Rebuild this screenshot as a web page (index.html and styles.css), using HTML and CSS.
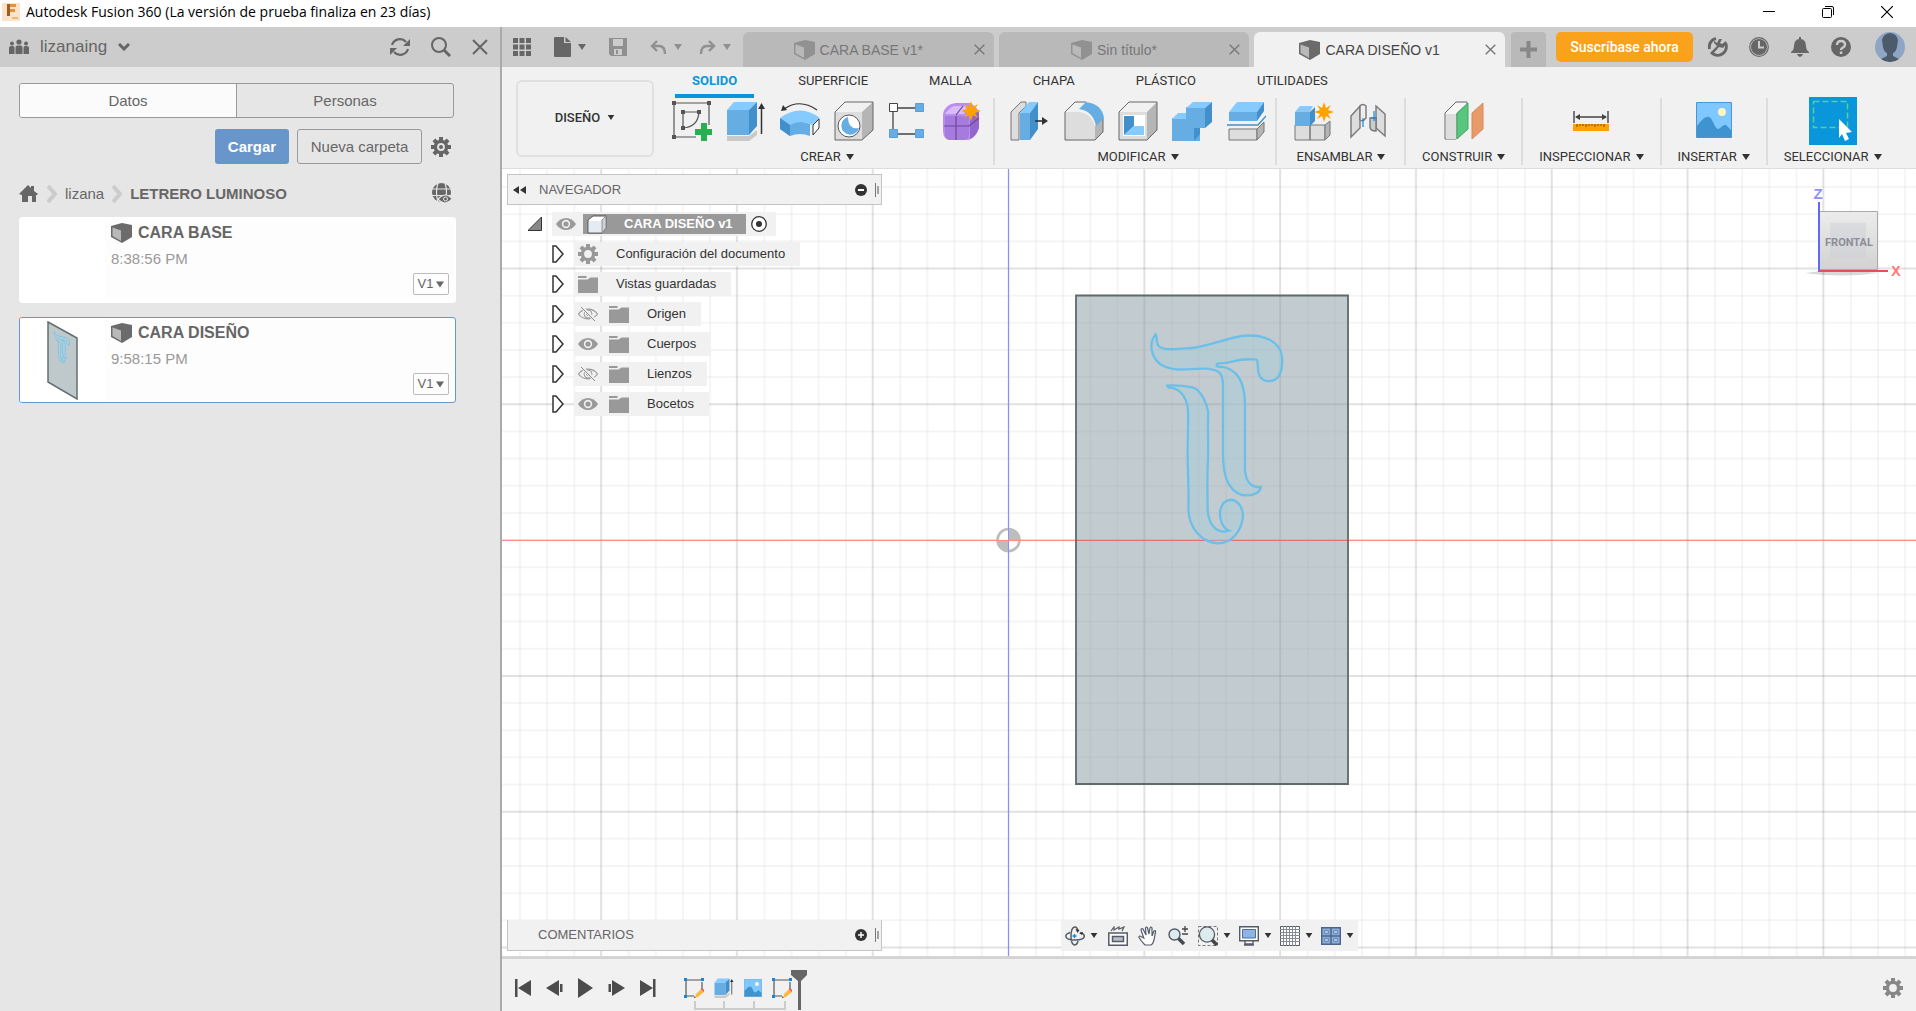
FILE: index.html
```html
<!DOCTYPE html>
<html lang="es">
<head>
<meta charset="utf-8">
<title>Autodesk Fusion 360</title>
<link rel="stylesheet" href="styles.css">
</head>
<body>
<svg class="defs" aria-hidden="true">
  <defs>
    <symbol id="cube" viewBox="0 0 21 20"><path fill="#6b6b6b" d="M0 3 11 0l10 2v12l-10 6L0 14z"/><path fill="#b9b9b9" d="M1.500 4.500l8.500 3v10.500l-8.500-5z"/></symbol>
    <symbol id="close" viewBox="0 0 16 16"><path d="M1 1l14 14M15 1L1 15" stroke="currentColor" stroke-width="2" fill="none"/></symbol>
    <symbol id="caret" viewBox="0 0 8 6"><path d="M0 0h8L4 6z" fill="currentColor"/></symbol>
    <symbol id="gear" viewBox="0 0 20 20"><g fill="currentColor"><path id="cog" d="M8 0h4v4H8zM8 16h4v4H8zM0 8h4v4H0zM16 8h4v4h-4z"/><use href="#cog" transform="rotate(45 10 10)"/></g><circle cx="10" cy="10" r="5.6" fill="none" stroke="currentColor" stroke-width="3.4"/></symbol>
    <symbol id="gear-dot" viewBox="0 0 20 20"><use href="#gear" width="20" height="20"/><circle cx="10" cy="10" r="2" fill="currentColor"/></symbol>
    <symbol id="eye" viewBox="0 0 20 14"><path d="M0 7C5-1 15-1 20 7 15 15 5 15 0 7z" fill="#999"/><circle cx="10" cy="7" r="3.4" fill="none" stroke="#f1f1f1" stroke-width="1.6"/></symbol>
    <symbol id="eye-off" viewBox="0 0 20 14"><path d="M.5 7C5 .5 15 .5 19.500 7 15 13.500 5 13.500.5 7z" fill="none" stroke="#999" stroke-width="1.200"/><circle cx="10" cy="7" r="4" fill="none" stroke="#999"/><circle cx="10" cy="7" r="1.600" fill="none" stroke="#999"/><path d="M3.500 0l14 14" stroke="#f1f1f1" stroke-width="3"/><path d="M3 0l14 14" stroke="#888"/></symbol>
    <symbol id="folder" viewBox="0 0 20 17"><path d="M0 0h8.500v2H0zM0 3.500h9.500l3-2H20V17H0z" fill="#999"/></symbol>
    <symbol id="closed" viewBox="0 0 12 18"><path d="M1 1h3l7 8-7 8H1z" fill="#fff" stroke="#333" stroke-width="1.500"/></symbol>
    <symbol id="star" viewBox="0 0 20 20"><path fill="#ffa200" d="M10 0l2 6 5-3-3 5 6 2-6 2 3 5-5-3-2 6-2-6-5 3 3-5-6-2 6-2-3-5 5 3z"/></symbol>
    <symbol id="picture" viewBox="0 0 36 36"><path fill="#7fc8ff" stroke="#4a97cf" d="M.5.5h35v35H.5z"/><path fill="#3f93cf" d="M1 24c4-5 8-10 12-9s5 11 9 12c3 0 5-5 8-4l5 5v7H1z"/><circle cx="26" cy="10" r="4" fill="#fdf6c4"/></symbol>
    <symbol id="extrude" viewBox="0 0 40 40"><path fill="#c9c9c9" d="M1 35h22l8-6v5l-8 6H1z"/><path fill="#66ade3" d="M1 9h22v25H1z"/><path fill="#86cbff" d="M1 9l7-8h23l-8 8z"/><path fill="#4190cc" d="M23 9l8-8v24l-8 9z"/><path d="M35.500 33V5" stroke="#333" stroke-width="1.500"/><path d="M32 8l3.500-6L39 8z" fill="#333"/></symbol>
    <symbol id="sketch-edit" viewBox="0 0 20 20"><path d="M2 2h16M2 2v16h8M18 4v8" fill="none" stroke="#555" stroke-width="1.200"/><path fill="#1587dd" d="M0 0h3v3H0zM17 0h3v3h-3zM0 17h3v3H0z"/><path fill="#ffb942" d="M12 16l5-5 3 3-6 5-3 1z"/><path fill="#f04455" d="M17 11l1-1 3 3-1 1z"/><path fill="#666" d="M10 18l2 2h-2z"/></symbol>
    <symbol id="drag" viewBox="0 0 4 14"><path d="M.5 0v14" stroke="#777"/><path d="M3 3v8" stroke="#888" stroke-width="1.500"/></symbol>
    <path id="glyph" d="M287 163C265 190 273 230 300 252C345 280 390 264 435 266C480 268 489 280 489 320V520C489 590 504 630 545 645C575 650 600 640 603 621C580 625 558 612 555 570V370C553 300 530 268 485 260C470 262 465 255 475 250C525 252 520 232 590 239C598 245 584 290 615 302C660 312 669 270 666 230C662 185 610 160 545 168C490 178 430 202 395 204C340 208 310 212 296 198C287 187 293 175 287 163ZM322 317C350 314 375 318 400 323C425 332 442 375 445 398C442 440 446 480 444 540C441 590 442 640 443 690C446 740 475 762 507 752C478 740 472 690 492 668C515 648 547 665 549 708C545 755 515 790 474 790C425 788 388 745 385 690C388 640 382 570 383 500C384 450 385 415 384 390C380 345 355 323 326 323Z"/>
  </defs>
</svg>

<header class="titlebar">
  <svg class="logo" viewBox="0 0 18 18"><path fill="#fbe3cb" d="M0 0h18v18H0z"/><path fill="#e8913d" d="M5 1h9v3H8v2h5v3H8v4H5z"/><path fill="#a75a1c" d="M5 1h3v12H5z"/><path fill="#f3b57b" d="M10 14h6v2h-6z"/></svg>
  <h1 class="title">Autodesk Fusion 360 (La versión de prueba finaliza en 23 días)</h1>
  <div class="window-buttons">
    <button aria-label="Minimizar"><svg width="12" height="12" viewBox="0 0 12 12"><path d="M0 5.500h12" stroke="#000"/></svg></button>
    <button aria-label="Restaurar"><svg width="12" height="12" viewBox="0 0 12 12"><path d="M.5 3.500a1 1 0 0 1 1-1h7a1 1 0 0 1 1 1v7a1 1 0 0 1-1 1h-7a1 1 0 0 1-1-1zM3 .5h7a1.500 1.500 0 0 1 1.500 1.500v7" fill="none" stroke="#000"/></svg></button>
    <button aria-label="Cerrar"><svg width="12" height="12" viewBox="0 0 12 12"><path d="M0 0l12 12M12 0L0 12" stroke="#000" stroke-width="1.200"/></svg></button>
  </div>
</header>

<div class="app">
  <aside class="data-panel">
    <div class="panel-head">
      <button class="team">
        <svg width="20" height="16" viewBox="0 0 20 16" fill="#666"><circle cx="3" cy="4.500" r="2"/><circle cx="10" cy="3" r="2.600"/><circle cx="17" cy="4.500" r="2"/><path d="M0 15V9q0-2 2-2h2q1.500 0 1.500 2v6zM6.500 15V8.500q0-2 2-2h3q2 0 2 2V15zM14.500 15V9q0-2 1.500-2h2q2 0 2 2v6z"/></svg>
        lizanaing
        <svg width="12" height="8" viewBox="0 0 12 8"><path d="M1 1l5 5 5-5" fill="none" stroke="#666" stroke-width="3"/></svg>
      </button>
      <div class="panel-tools">
        <button aria-label="Actualizar"><svg width="20" height="20" viewBox="0 0 20 20"><path d="M2 8a8.200 8.200 0 0 1 14-3M18 12a8.200 8.200 0 0 1-14 3" fill="none" stroke="#666" stroke-width="2.200"/><path d="M20 2v7h-7zM0 18v-7h7z" fill="#666"/></svg></button>
        <button aria-label="Buscar"><svg width="20" height="20" viewBox="0 0 20 20"><circle cx="8" cy="8" r="7" fill="none" stroke="#666" stroke-width="2"/><path d="M13 13l6 6" stroke="#666" stroke-width="3"/></svg></button>
        <button aria-label="Cerrar panel"><svg width="16" height="16"><use href="#close"/></svg></button>
      </div>
    </div>
    <div class="panel-body">
      <div class="segments"><button class="active">Datos</button><button>Personas</button></div>
      <div class="actions">
        <button class="primary">Cargar</button>
        <button class="outline">Nueva carpeta</button>
        <button class="gear" aria-label="Configuración"><svg width="20" height="20"><use href="#gear-dot"/></svg></button>
      </div>
      <nav class="crumbs">
        <a href="#" aria-label="Inicio"><svg width="20" height="18" viewBox="0 0 20 18"><path fill="#666" d="M0 9l9-9 3 3V1h3v5l4 3-1 1h-1v7h-4v-6H9v6H3v-7z"/></svg></a>
        <svg width="10" height="18" viewBox="0 0 10 18"><path d="M1 1l7 8-7 8" fill="none" stroke="#ccc" stroke-width="4"/></svg>
        <a href="#">lizana</a>
        <svg width="10" height="18" viewBox="0 0 10 18"><path d="M1 1l7 8-7 8" fill="none" stroke="#ccc" stroke-width="4"/></svg>
        <b>LETRERO LUMINOSO</b>
        <button class="globe" aria-label="Compartir"><svg width="20" height="21" viewBox="0 0 20 21"><circle cx="9.500" cy="9.500" r="9.500" fill="#666"/><path d="M0 6h19M0 12.500h19M6 0q-3 9 0 19M13 0q3 9 0 19" fill="none" stroke="#e6e6e6" stroke-width="1.200"/><path d="M6 16q8-8 14 0-7 8-14 0z" fill="#666" stroke="#e6e6e6" stroke-width="1.200"/><circle cx="13.500" cy="16" r="2" fill="none" stroke="#e6e6e6"/></svg></button>
      </nav>
      <ul class="files">
        <li class="file">
          <div class="thumb"></div>
          <div class="file-info">
            <h2><svg width="21" height="20"><use href="#cube"/></svg>CARA BASE</h2>
            <p>8:38:56 PM</p>
            <button class="version">V1<svg width="8" height="7"><use href="#caret"/></svg></button>
          </div>
        </li>
        <li class="file selected">
          <div class="thumb"><svg width="31" height="79" viewBox="0 0 31 79"><path d="M1 1l29 16v61L1 61z" fill="#bfc8cb" stroke="#627073" stroke-width="1.500"/><g transform="matrix(.04 .02 0 .042 -4 -1.500)" fill="#b0cfdb" stroke="#7cc5e8" stroke-width="22"><use href="#glyph"/></g></svg></div>
          <div class="file-info">
            <h2><svg width="21" height="20"><use href="#cube"/></svg>CARA DISEÑO</h2>
            <p>9:58:15 PM</p>
            <button class="version">V1<svg width="8" height="7"><use href="#caret"/></svg></button>
          </div>
        </li>
      </ul>
    </div>
  </aside>

  <main class="workspace">
    <div class="tabbar">
      <div class="quick">
        <button aria-label="Datos"><svg width="18" height="18" viewBox="0 0 18 18"><path fill="#666" d="M0 0h5v5H0zM6.500 0h5v5h-5zM13 0h5v5h-5zM0 6.500h5v5H0zM6.500 6.500h5v5h-5zM13 6.500h5v5h-5zM0 13h5v5H0zM6.500 13h5v5h-5zM13 13h5v5h-5z"/></svg></button>
        <button aria-label="Archivo"><svg width="17" height="20" viewBox="0 0 17 20"><path fill="#666" d="M0 1q0-1 1-1h9v6h7v13q0 1-1 1H1q-1 0-1-1zM11.500 0L17 5h-5.500z"/></svg><svg width="8" height="6"><use href="#caret"/></svg></button>
        <button class="dim" aria-label="Guardar"><svg width="18" height="18" viewBox="0 0 18 18"><path fill="currentColor" fill-rule="evenodd" d="M0 0h18v18H2l-2-2zM4 1v7h10V1zM5 11v6h8v-6zM7 12h2v4H7z"/></svg></button>
        <button class="dim" aria-label="Deshacer"><svg width="17" height="15" viewBox="0 0 17 15"><path d="M7 1L2 6l5 5M2 6h7q6 0 6 8" fill="none" stroke="currentColor" stroke-width="2.400"/></svg><svg width="8" height="6"><use href="#caret"/></svg></button>
        <button class="dim" aria-label="Rehacer"><svg width="17" height="15" viewBox="0 0 17 15"><path d="M10 1l5 5-5 5M15 6H8Q2 6 2 14" fill="none" stroke="currentColor" stroke-width="2.400"/></svg><svg width="8" height="6"><use href="#caret"/></svg></button>
      </div>
      <div class="docs">
        <div class="doc"><a href="#"><svg width="21" height="20"><use href="#cube"/></svg>CARA BASE v1*</a><button aria-label="Cerrar"><svg width="11" height="11"><use href="#close"/></svg></button></div>
        <div class="doc"><a href="#"><svg width="21" height="20"><use href="#cube"/></svg>Sin título*</a><button aria-label="Cerrar"><svg width="11" height="11"><use href="#close"/></svg></button></div>
        <div class="doc current"><a href="#"><svg width="21" height="20"><use href="#cube"/></svg>CARA DISEÑO v1</a><button aria-label="Cerrar"><svg width="11" height="11"><use href="#close"/></svg></button></div>
      </div>
      <button class="new-doc" aria-label="Nuevo diseño"><svg width="17" height="17" viewBox="0 0 17 17"><path d="M8.500 0v17M0 8.500h17" stroke="#888" stroke-width="4"/></svg></button>
      <button class="subscribe">Suscríbase ahora</button>
      <div class="account">
        <button aria-label="Extensiones"><svg width="20" height="20" viewBox="0 0 20 20"><path d="M8 1.500A8.600 8.600 0 0 0 1.500 12M4.500 16.500A8.600 8.600 0 0 0 17.500 6" fill="none" stroke="#666" stroke-width="3"/><path d="M2 16l7-7-3-3V4l3 2 2-4h3l-2 4 2 1 4-3v3l-3 4-4-1-7 8z" fill="#666"/></svg></button>
        <button aria-label="Estado de trabajos"><svg width="20" height="20" viewBox="0 0 20 20"><circle cx="10" cy="10" r="9.300" fill="none" stroke="#666" stroke-width="1.200"/><circle cx="10" cy="10" r="8" fill="#666"/><path d="M10 4v6.500h5" fill="none" stroke="#ccc" stroke-width="2"/></svg></button>
        <button aria-label="Notificaciones"><svg width="20" height="20" viewBox="-1 0 20 20"><path fill="#666" d="M8 0h2v2q5 1 5 7 0 4 3 6v1H0v-1q3-2 3-6 0-6 5-7zM6 17h6q-1 3-3 3t-3-3z"/></svg></button>
        <button aria-label="Ayuda"><svg width="20" height="20" viewBox="0 0 20 20"><circle cx="10" cy="10" r="10" fill="#666"/><path d="M6 8q0-4 4-4t4 3.500q0 2-2 3t-2 2.500" fill="none" stroke="#ccc" stroke-width="2.400"/><path fill="#ccc" d="M8.800 14.500h2.500V17H8.800z"/></svg></button>
        <button class="avatar" aria-label="Cuenta"><svg width="30" height="30" viewBox="0 0 30 30"><circle cx="15" cy="15" r="15" fill="#8fa5c6"/><path fill="#4c5a6b" d="M7 8q1-6 8-7 7 1 8 7l-1 7q-1 5-4 6v3l6 3q-4 3-9 3t-9-3l6-3v-3q-3-1-4-6z"/></svg></button>
      </div>
    </div>

    <div class="ribbon">
      <button class="workspace-menu">DISEÑO<svg width="8" height="5"><use href="#caret"/></svg></button>
      <div class="ribbon-main">
        <nav class="ribbon-tabs">
          <button class="active">SOLIDO</button><button>SUPERFICIE</button><button>MALLA</button><button>CHAPA</button><button>PLÁSTICO</button><button>UTILIDADES</button>
        </nav>
        <div class="groups">
          <section class="group create">
            <div class="tools">
              <button aria-label="Crear boceto"><svg viewBox="0 0 40 40"><path d="M2 2h35v22M2 2v34h22M11 11h16q-1 15-16 16z" fill="none" stroke="#555" stroke-width="1.200"/><path fill="#555" d="M0 0h4v4H0zM35 0h4v4h-4zM0 34h4v4H0zM9 9h4v4H9zM25 9h4v4h-4zM9 25h4v4H9z"/><path fill="#26b050" d="M29 22h6v6h5v6h-5v6h-6v-6h-6v-6h6z"/></svg></button>
              <button aria-label="Extruir"><svg><use href="#extrude"/></svg></button>
              <button aria-label="Revolución"><svg viewBox="0 0 40 40"><path d="M4 8Q20-3 37 9" fill="none" stroke="#333" stroke-width="1.200"/><path fill="#333" d="M1 10l2-6 4 5z"/><path fill="#66ade3" d="M0 17l10 6q10-5 20 0v12q-10-4-20 0L0 28z"/><path fill="#86cbff" d="M0 17q20-15 40 0l-8 7q-12-6-22 0z"/><path fill="#4190cc" d="M0 17l10 7v11L0 28z"/><path fill="#fff" stroke="#333" d="M33 24l6-6v9l-6 7z"/></svg></button>
              <button aria-label="Agujero"><svg viewBox="0 0 40 40"><path fill="#f1f1f1" d="M1 11L11 1h28L28 11z"/><path fill="#ddd" d="M1 11h27v28H1z"/><path fill="#b5b5b5" d="M28 11L39 1v28L28 39z"/><path fill="none" stroke="#666" d="M1 11L11 1h28v28L28 39H1z"/><circle cx="15" cy="25" r="11" fill="#fff" stroke="#555"/><path fill="#66ade3" d="M14 16a9 9 0 1 0 11 11Q14 29 14 16z"/></svg></button>
              <button aria-label="Patrón"><svg viewBox="0 0 40 40"><path d="M5 7h27M5 7v26h27" fill="none" stroke="#444" stroke-width="1.300"/><path fill="#66ade3" stroke="#5a9fd5" d="M27.500 2.500h8v8h-8zM1.500 28.500h8v8h-8zM27.500 28.500h8v8h-8z"/><path fill="#fff" stroke="#444" d="M1.500 2.500h8v8h-8z"/></svg></button>
              <button aria-label="Crear forma"><svg viewBox="0 0 40 40"><path fill="#bb8df0" d="M1 13Q3 3 14 2h14q9 4 9 14v8q0 9-10 15H9q-8 0-8-9z"/><path fill="#9465cc" d="M28 15l9-5v17q-3 9-9 11z"/><path fill="#d9bbfb" d="M3 13q4-6 9-8h14l-4 8z"/><path fill="#a77ae0" d="M3 15h24v18q0 6-6 6H9q-6 0-6-6z"/><path d="M14 15v24M2 25h25l10-8M14 14l7-9" fill="none" stroke="#6c4893" stroke-width="1.200"/><use href="#star" x="19" y="0" width="20" height="20"/></svg></button>
            </div>
            <button class="group-label">CREAR<svg width="8" height="6"><use href="#caret"/></svg></button>
          </section>
          <section class="group modify">
            <div class="tools">
              <button aria-label="Pulsar o tirar"><svg viewBox="0 0 40 40"><path fill="#ddd" stroke="#777" d="M9 39H1V11L11 1h5v4L9 12z"/><path fill="#66ade3" d="M10 12h10v27H10z"/><path fill="#86cbff" d="M10 12L19 1h9l-8 11z"/><path fill="#4190cc" d="M20 12l8-11v27l-8 11z"/><path d="M25 20h9" stroke="#333" stroke-width="1.600"/><path fill="#333" d="M32 16l6 4-6 4z"/></svg></button>
              <button aria-label="Empalme"><svg viewBox="0 0 40 40"><path fill="#ddd" d="M1 11h14q14 2 16 16v12H1z"/><path fill="#b5b5b5" d="M31 25l8-8v14l-8 8z"/><path fill="#f1f1f1" d="M1 11L11 1h11l-7 9z"/><path fill="none" stroke="#666" d="M22 1H11L1 11v28h30l8-8V17"/><path fill="#66ade3" d="M15 8l7-7q16 2 18 16l-8 8Q29 10 15 8z"/></svg></button>
              <button aria-label="Vaciado"><svg viewBox="0 0 40 40"><path fill="#f1f1f1" d="M1 11L11 1h28L29 11z"/><path fill="#ddd" d="M1 11h28v28H1z"/><path fill="#b5b5b5" d="M29 11L39 1v28L29 39z"/><path fill="none" stroke="#666" d="M1 11L11 1h28v28L29 39H1z"/><path fill="#fff" d="M5 14h22v21H5z"/><path fill="#4190cc" d="M6 15h10v10L6 34z"/><path fill="#86cbff" d="M6 34l10-9h10v9z"/></svg></button>
              <button aria-label="Combinar"><svg viewBox="0 0 40 40"><path fill="#66ade3" d="M0 17h14V6h19v21h-5v13H0z"/><path fill="#86cbff" d="M0 18l6-6h8v6zM14 7l7-6h19l-7 6z"/><path fill="#4190cc" d="M33 7l7-6v20l-7 6h-5v6l-6 7V27h11z"/></svg></button>
              <button aria-label="Dividir cuerpo"><svg viewBox="0 0 40 40"><path fill="#66ade3" d="M3 11h28v9H3z"/><path fill="#86cbff" d="M3 11l8-10h27l-7 10z"/><path fill="#4190cc" d="M31 11l7-10v9l-7 10z"/><path d="M1 24h31l8-9" fill="none" stroke="#4190cc" stroke-width="1.400"/><path fill="#ddd" stroke="#777" d="M3 28h28v11H3z"/><path fill="#b5b5b5" stroke="#777" d="M31 28l7-7v10l-7 8z"/></svg></button>
            </div>
            <button class="group-label">MODIFICAR<svg width="8" height="6"><use href="#caret"/></svg></button>
          </section>
          <section class="group">
            <div class="tools">
              <button aria-label="Nuevo componente"><svg viewBox="0 0 40 40"><path fill="#ddd" stroke="#777" d="M1 24h15v15H1zM16 24h15v15H16z"/><path fill="#b5b5b5" stroke="#777" d="M31 24l5-4v14l-5 5z"/><path fill="#66ade3" d="M1 11h15v14H1z"/><path fill="#86cbff" d="M1 11l5-6h13l-3 6z"/><path fill="#4190cc" d="M16 11l5-5v14l-5 5z"/><use href="#star" x="20" y="1" width="20" height="20"/></svg></button>
              <button aria-label="Unión"><svg viewBox="0 0 40 40"><path fill="#ddd" stroke="#777" stroke-width="1.400" d="M3 15l9-10v22L3 36z"/><path fill="#eee" stroke="#777" stroke-width="1.400" d="M12 5q3-3 6 0v12q-3 4-6 2z"/><path fill="#ddd" stroke="#777" stroke-width="1.400" d="M28 5l9 8v22l-9-8z"/><path fill="#ccc" stroke="#777" stroke-width="1.400" d="M22 17h6v13q-6 0-6-4z"/><path d="M15 17v9M26 10v10M23 17h6" stroke="#1587dd" stroke-width="1.200"/></svg></button>
            </div>
            <button class="group-label">ENSAMBLAR<svg width="8" height="6"><use href="#caret"/></svg></button>
          </section>
          <section class="group">
            <div class="tools"><button aria-label="Plano de desfase"><svg viewBox="0 0 40 40"><path fill="#f6f6f6" stroke="#666" d="M1 12L12 1h11v2L12 14v24H1z"/><path fill="#ddd" d="M2 13h10v25H2z"/><path fill="#58c67c" stroke="#45a766" d="M13 12L24 2v26L13 38z"/><path fill="#e69b68" stroke="#d98a55" d="M28 12L39 2v26L28 38z"/></svg></button></div>
            <button class="group-label">CONSTRUIR<svg width="8" height="6"><use href="#caret"/></svg></button>
          </section>
          <section class="group">
            <div class="tools"><button aria-label="Medir"><svg viewBox="0 0 40 40"><path d="M3 10v12M37 10v12M5 16h30" stroke="#444" stroke-width="1.400"/><path fill="#444" d="M4 16l5-3v6zM36 16l-5-3v6z"/><path fill="#ffa200" d="M2 23h36v7H2z"/><path d="M6 23v3M9 23v2M12 23v2M15 23v3M18 23v2M21 23v2M24 23v3M27 23v2M30 23v2M33 23v3" stroke="#6b4a00"/></svg></button></div>
            <button class="group-label">INSPECCIONAR<svg width="8" height="6"><use href="#caret"/></svg></button>
          </section>
          <section class="group">
            <div class="tools"><button aria-label="Insertar lienzo"><svg viewBox="0 0 40 40"><use href="#picture" x="2" y="1" width="36" height="36"/></svg></button></div>
            <button class="group-label">INSERTAR<svg width="8" height="6"><use href="#caret"/></svg></button>
          </section>
          <section class="group">
            <div class="tools"><button class="select-tool" aria-label="Seleccionar"><svg viewBox="0 0 48 48"><path fill="#0a96db" d="M0 0h48v48H0z"/><path d="M4.500 4.500h34v26h-34z" fill="none" stroke="#59cf97" stroke-width="1.500" stroke-dasharray="6 3"/><path fill="#fff" d="M30 22l13 13-6 1 3 6-4 2-3-7-3 4z"/></svg></button></div>
            <button class="group-label">SELECCIONAR<svg width="8" height="6"><use href="#caret"/></svg></button>
          </section>
        </div>
      </div>
    </div>

    <div class="viewport">
      <svg class="scene" viewBox="502 169 1414 787" preserveAspectRatio="xMidYMid slice" aria-label="Lienzo de diseño">
        <g fill="none" stroke="#000">
          <path opacity=".038" stroke-width="787" stroke-dasharray="2 25.160" d="M519 562.500H1916"/>
          <path opacity=".038" stroke-width="1414" stroke-dasharray="2 25.160" d="M1209 186V956"/>
          <path opacity=".08" stroke-width="787" stroke-dasharray="2 133.800" d="M600 562.500H1916"/>
          <path opacity=".08" stroke-width="1414" stroke-dasharray="2 133.800" d="M1209 267.500V956"/>
        </g>
        <path d="M502 540.500H1916" stroke="#ff8d8d" stroke-width="1.200"/>
        <path d="M1008.500 169V956" stroke="#8d8dff"/>
        <path d="M1076 295.500h272V784h-272z" fill="#8599a2" fill-opacity=".5" stroke="#5f6a6b" stroke-width="1.800"/>
        <path d="M1077 540.500h270" stroke="#e56f74"/>
        <use href="#glyph" transform="translate(1060 280) scale(.3333)" fill="#a6ccda" fill-opacity=".45" stroke="#6dbfe8" stroke-width="7"/>
        <circle cx="1008.500" cy="540" r="11" fill="#fff" stroke="#bdbdbd" stroke-width="2.600"/>
        <path fill="#bdbdbd" d="M1008.500 529a11 11 0 0 1 11 11h-22a11 11 0 0 0 11 11z"/>
        <path d="M1008.500 527v26" stroke="#8d8dff"/><path d="M996 540.500h25" stroke="#ff8d8d" stroke-width="1.200"/>
      </svg>

      <svg class="viewcube" viewBox="0 0 100 100" aria-label="Cubo de vistas">
        <defs><linearGradient id="face" x2="0" y2="1"><stop stop-color="#ececec"/><stop offset="1" stop-color="#d2d2d2"/></linearGradient></defs>
        <path d="M2 92q30-5 74 0-40 5-74 0z" fill="#000" opacity=".15"/>
        <path d="M16.500 30.500h58v58h-58z" fill="url(#face)" stroke="#aaa"/>
        <path d="M27 42h36v35H27z" fill="#cdd0d8" opacity=".5"/>
        <path d="M16 21v70" stroke="#6666f2" stroke-width="2"/><path d="M16 90h69" stroke="#f04d52" stroke-width="2"/>
        <text class="cube-face" x="46" y="65" text-anchor="middle">FRONTAL</text>
        <text class="axis-z" x="15" y="18" text-anchor="middle">Z</text>
        <text class="axis-x" x="93" y="95" text-anchor="middle">X</text>
      </svg>

      <div class="browser">
        <div class="strip">
          <svg width="13" height="8" viewBox="0 0 13 8"><path d="M6 0v8L0 4zM13 0v8L7 4z" fill="#333"/></svg>
          <span>NAVEGADOR</span>
          <button aria-label="Contraer"><svg width="12" height="12" viewBox="0 0 12 12"><circle cx="6" cy="6" r="6" fill="#333"/><path d="M3 6h6" stroke="#fff" stroke-width="2"/></svg></button>
          <svg width="4" height="14"><use href="#drag"/></svg>
        </div>
        <ul class="tree">
          <li class="root"><svg width="14" height="14" viewBox="0 0 14 14"><path d="M13.500 0v13.500H0z" fill="#888" stroke="#333"/></svg>
            <div class="node"><svg width="20" height="14"><use href="#eye"/></svg><span class="root-name"><svg width="20" height="19" viewBox="0 0 20 19"><path d="M1 5l5-4h13v12l-4 5H1z" fill="#fff" stroke="#555"/><path d="M15 5l4-4v12l-4 5z" fill="#cdd3dd" stroke="#888"/><path fill="#e6eaf2" d="M2 6h12v11H2z"/></svg>CARA DISEÑO v1</span><svg width="16" height="16" viewBox="0 0 16 16"><circle cx="8" cy="8" r="7.300" fill="#fff" stroke="#333" stroke-width="1.300"/><circle cx="8" cy="8" r="3" fill="#333"/></svg></div></li>
          <li><svg width="12" height="18"><use href="#closed"/></svg><div class="node"><svg class="muted" width="20" height="20"><use href="#gear"/></svg><span>Configuración del documento</span></div></li>
          <li><svg width="12" height="18"><use href="#closed"/></svg><div class="node"><svg width="20" height="17"><use href="#folder"/></svg><span>Vistas guardadas</span></div></li>
          <li><svg width="12" height="18"><use href="#closed"/></svg><div class="node"><svg width="20" height="14"><use href="#eye-off"/></svg><svg class="second" width="20" height="17"><use href="#folder"/></svg><span>Origen</span></div></li>
          <li><svg width="12" height="18"><use href="#closed"/></svg><div class="node"><svg width="20" height="14"><use href="#eye"/></svg><svg class="second" width="20" height="17"><use href="#folder"/></svg><span>Cuerpos</span></div></li>
          <li><svg width="12" height="18"><use href="#closed"/></svg><div class="node"><svg width="20" height="14"><use href="#eye-off"/></svg><svg class="second" width="20" height="17"><use href="#folder"/></svg><span>Lienzos</span></div></li>
          <li><svg width="12" height="18"><use href="#closed"/></svg><div class="node"><svg width="20" height="14"><use href="#eye"/></svg><svg class="second" width="20" height="17"><use href="#folder"/></svg><span>Bocetos</span></div></li>
        </ul>
      </div>

      <div class="viewport-foot">
        <div class="strip comments">
          <span>COMENTARIOS</span>
          <button aria-label="Expandir"><svg width="12" height="12" viewBox="0 0 12 12"><circle cx="6" cy="6" r="6" fill="#333"/><path d="M3 6h6M6 3v6" stroke="#fff" stroke-width="1.500"/></svg></button>
          <svg width="4" height="14"><use href="#drag"/></svg>
        </div>
        <div class="navbar">
          <button aria-label="Órbita"><svg width="20" height="20" viewBox="0 0 20 20"><path d="M13 5Q12 .5 9.500 1 6 2 6 10t3.500 9q2.500 0 3.500-4M5 6.500Q.8 8 .8 10q0 4 9.200 4 9.300 0 9.300-4 0-2-4-3.500" fill="none" stroke="#555b66" stroke-width="1.500"/><path d="M7.500 10h4M9.500 8v4" stroke="#1587dd" stroke-width="1.400"/><path d="M10.500 3l4 1-2 3zM14 7l4-1-1 3z" fill="#333"/></svg><svg class="caret" width="8" height="5"><use href="#caret"/></svg></button>
          <button aria-label="Mirar a"><svg width="20" height="20" viewBox="0 0 20 20"><path d="M.8 7h18.500v12.300H.8z" fill="#fff" stroke="#555b66" stroke-width="1.500"/><path d="M4.500 10.500h11v5h-11z" fill="#b9bdc8" stroke="#555b66" stroke-width="1.500"/><path d="M3 5l3-4v3l5-3v2l5-2-2 4" fill="none" stroke="#555b66" stroke-width="1.200"/></svg></button>
          <button aria-label="Encuadre"><svg width="20" height="20" viewBox="0 0 20 20"><path d="M7 19Q3 15 .8 11q0-2 3 0l2 1L3 4q0-2 2-1l3 6-.5-7q1-2 2 0L11 8l1-6q1-2 2 0v8l2-5q2-1 1.500 1L16 14q-1 4-3 5z" fill="#fff" stroke="#555b66" stroke-width="1.200"/></svg></button>
          <button aria-label="Zoom"><svg width="20" height="20" viewBox="0 0 20 20"><path d="M10 12l6 6" stroke="#454b55" stroke-width="3.500"/><circle cx="6.500" cy="8.500" r="5.500" fill="#dcebee" stroke="#555b66" stroke-width="1.400"/><path d="M17 0v6M14 3h6M14 8h6" stroke="#444" stroke-width="1.300"/></svg></button>
          <button aria-label="Ajustar"><svg width="20" height="20" viewBox="0 0 20 20"><path d="M.5.5h19v19H.5z" fill="none" stroke="#777" stroke-dasharray="3 2"/><path d="M14 14l5 5" stroke="#444" stroke-width="3.500"/><circle cx="9" cy="8.500" r="7.600" fill="#dcebee" stroke="#555b66" stroke-width="1.300"/></svg><svg class="caret" width="8" height="5"><use href="#caret"/></svg></button>
          <button aria-label="Visualización"><svg width="20" height="20" viewBox="0 0 20 20"><path d="M.7.7h18.600v14H.7zM6 15v3h8v-3M5 19h10" fill="#fff" stroke="#555b66" stroke-width="1.400"/><path d="M3.500 3.500h13v8.500h-13z" fill="#8db5e3" stroke="#4d6f99"/></svg><svg class="caret" width="8" height="5"><use href="#caret"/></svg></button>
          <button aria-label="Rejilla"><svg width="20" height="20" viewBox="0 0 20 20"><path d="M.5.5h19v19H.5z" fill="#fff" stroke="#555b66"/><path d="M3.500 0v20M6.500 0v20M9.500 0v20M12.500 0v20M15.500 0v20M0 3.500h20M0 6.500h20M0 9.500h20M0 12.500h20M0 15.500h20" stroke="#858a94"/></svg><svg class="caret" width="8" height="5"><use href="#caret"/></svg></button>
          <button aria-label="Ventanas"><svg width="20" height="18" viewBox="0 0 20 18"><path d="M.7.7h18.600v16.600H.7z" fill="#8dacd6" stroke="#4d658c" stroke-width="1.400"/><path d="M10 0v18M0 9h20" stroke="#4d658c" stroke-width="1.500"/><path d="M3.500 3.500h4v3h-4zM12.500 3.500h4v3h-4zM3.500 11.500h4v3h-4zM12.500 11.500h4v3h-4z" fill="#a9c3e6" stroke="#6b8cbb"/></svg><svg class="caret" width="8" height="5"><use href="#caret"/></svg></button>
        </div>
      </div>
    </div>

    <footer class="timeline">
      <div class="playback">
        <button aria-label="Inicio"><svg width="17" height="18" viewBox="0 0 17 18"><path fill="#4c4c4c" d="M0 0h2.500v18H0zM16 1v16L3 9z"/></svg></button>
        <button aria-label="Paso atrás"><svg width="17" height="18" viewBox="0 0 17 18"><path fill="#4c4c4c" d="M13 1v16L0 9zM14 5h2.500v8H14z"/></svg></button>
        <button aria-label="Reproducir"><svg width="17" height="20" viewBox="0 0 17 20"><path fill="#4c4c4c" d="M1 0v20l15-10z"/></svg></button>
        <button aria-label="Paso adelante"><svg width="17" height="18" viewBox="0 0 17 18"><path fill="#4c4c4c" d="M4 1v16l13-8zM.5 5H3v8H.5z"/></svg></button>
        <button aria-label="Fin"><svg width="17" height="18" viewBox="0 0 17 18"><path fill="#4c4c4c" d="M14 0h2.500v18H14zM1 1v16l13-8z"/></svg></button>
      </div>
      <div class="history">
        <button aria-label="Boceto 1"><svg width="20" height="20"><use href="#sketch-edit"/></svg></button>
        <button aria-label="Extrusión"><svg width="20" height="20"><use href="#extrude"/></svg></button>
        <button aria-label="Lienzo"><svg width="18" height="18"><use href="#picture"/></svg></button>
        <button aria-label="Boceto 2"><svg width="20" height="20"><use href="#sketch-edit"/></svg></button>
        <svg class="bracket" width="92" height="9" viewBox="0 0 92 9"><path d="M1 0v8h90V0M30 0v8M60 0v8" fill="none" stroke="#ccc" stroke-width="2"/></svg>
        <svg class="marker" width="16" height="40" viewBox="0 0 16 40"><path fill="#666" d="M0 0h16v5l-6 6v29H7V11L0 5z"/></svg>
      </div>
      <button class="settings" aria-label="Preferencias"><svg width="20" height="20"><use href="#gear"/></svg></button>
    </footer>
  </main>
</div>
</body>
</html>
```
FILE: styles.css
```css
* { box-sizing: border-box; }
html, body { height: 100%; margin: 0; }
body {
  display: flex;
  flex-direction: column;
  font: 15px/20px "Liberation Sans", Arial, sans-serif;
  color: #666;
  background: #f1f1f1;
  overflow: hidden;
}
button {
  display: flex;
  align-items: center;
  justify-content: center;
  margin: 0;
  padding: 0;
  border: 0;
  background: none;
  font: inherit;
  color: inherit;
}
a { color: inherit; text-decoration: none; }
ul { list-style: none; margin: 0; padding: 0; }
svg { display: block; flex: none; }
.defs { position: absolute; width: 0; height: 0; }

/* Window title */
.titlebar { display: flex; align-items: center; height: 27px; flex: none; padding: 0 0 3px 2px; background: #fff; }
.logo { width: 18px; height: 18px; }
.title { margin: 0 0 0 6px; font: 14px/20px "Open Sans", sans-serif; color: #000; }
.window-buttons { display: flex; margin-left: auto; }
.window-buttons button { width: 59px; height: 24px; }

.app { display: flex; flex: 1; min-height: 0; }

/* Data panel */
.data-panel { width: 502px; flex: none; background: #e6e6e6; border-right: 2px solid #aaa; }
.panel-head { display: flex; align-items: center; justify-content: space-between; height: 40px; padding: 0 12px 0 9px; background: #ccc; }
.team { gap: 11px; font-size: 17px; }
.panel-tools { display: flex; align-items: center; gap: 21px; }
.panel-body { padding: 16px 44px 0 19px; }
.segments { display: flex; height: 35px; margin-right: 2px; border: 1px solid #999; border-radius: 3px; overflow: hidden; }
.segments button { flex: 1; }
.segments .active { background: #fbfbfb; border-right: 1px solid #999; }
.actions { display: flex; align-items: center; justify-content: flex-end; gap: 8px; margin: 11px 4px 0 0; }
.primary { width: 74px; height: 35px; border-radius: 3px; background: #6896ca; color: #fff; font-weight: bold; }
.outline { width: 125px; height: 35px; border: 1px solid #999; border-radius: 3px; }
.gear { width: 22px; }
.crumbs { display: flex; align-items: center; gap: 8px; height: 53px; padding: 6px 4px 0 0; }
.globe { margin-left: auto; }
.files { display: grid; gap: 14px; }
.file { display: flex; height: 86px; border: 1px solid #fff; border-radius: 3px; background: #fdfdfd; overflow: hidden; }
.file.selected { border-color: #6896ca; }
.thumb { display: flex; align-items: center; justify-content: center; width: 85px; background: #fff; }
.file-info { flex: 1; padding: 5px 6px; }
.file-info h2 { display: flex; align-items: center; gap: 6px; margin: 0; font-size: 16px; line-height: 20px; }
.file-info p { margin: 6px 0 4px; color: #999; }
.version { width: 36px; height: 22px; gap: 3px; margin-left: auto; border: 1px solid #bbb; border-radius: 2px; font-size: 13px; }

/* Document tabs */
.workspace { display: flex; flex-direction: column; flex: 1; min-width: 0; }
.tabbar { display: flex; align-items: flex-end; height: 40px; flex: none; padding-left: 11px; background: #ccc; }
.quick { display: flex; align-items: center; gap: 23px; height: 40px; margin-right: 12px; }
.quick button { gap: 7px; }
.dim { color: #909090; }
.quick .dim:nth-child(4) { margin-right: -6px; }
.docs { display: flex; flex: 1; gap: 5px; min-width: 0; }
.doc { display: flex; align-items: center; flex: 1; height: 35px; padding-right: 9px; border-radius: 6px 6px 0 0; background: #b9b9b9; font-size: 14px; color: #777; }
.doc a { display: flex; align-items: center; justify-content: center; flex: 1; gap: 5px; }
.doc a svg { opacity: .5; }
.doc.current { background: #f1f1f1; color: #444; }
.doc.current a svg { opacity: 1; }
.doc button { color: #777; }
.new-doc { width: 35px; height: 35px; margin: 0 10px 0 6px; border-radius: 4px 4px 0 0; background: #b9b9b9; }
.subscribe { align-self: center; width: 137px; height: 30px; border-radius: 5px; background: #faa21b; color: #fff; font: 500 14px/20px Roboto, sans-serif; }
.account { display: flex; align-items: center; gap: 21px; height: 40px; padding: 0 11px 0 15px; }
.avatar { margin-left: 3px; }

/* Ribbon */
.ribbon { display: flex; height: 102px; flex: none; background: #f1f1f1; border-bottom: 1px solid #ddd; font: 13px/16px Roboto, sans-serif; color: #333; }
.workspace-menu { gap: 7px; width: 138px; height: 77px; margin: 13px 13px 0 14px; padding-bottom: 2px; border: 2px solid #e0e0e0; border-radius: 6px; font-weight: 500; }
.ribbon-main { flex: 1; }
.ribbon-tabs { display: flex; gap: 27px; padding-left: 8px; }
.ribbon-tabs button { height: 31px; padding: 0 17px; border-bottom: 4px solid transparent; }
.ribbon-tabs .active { border-color: #0a96db; color: #0a96db; font-weight: 700; }
.groups { display: flex; }
.group { position: relative; padding: 3px 16px 0; }
.group + .group { border-left: 2px solid #ddd; }
.group.create { padding: 3px 11px 0 5px; }
.group.modify { padding: 3px 9px 0 15px; }
.group:nth-child(3) { padding: 3px 16px 0 17px; }
.tools { display: flex; justify-content: center; gap: 14px; }
.tools svg { width: 40px; height: 40px; }
.tools .select-tool { margin: -4px 0; }
.tools .select-tool svg { width: 48px; height: 48px; }
.group-label { gap: 5px; margin: 8px auto 0; height: 16px; }

/* Modelling canvas */
.viewport { position: relative; display: flex; flex-direction: column; justify-content: space-between; flex: 1; min-height: 0; background: #fff; overflow: hidden; font-size: 13px; }
.scene { position: absolute; inset: 0; width: 100%; height: 100%; }
.viewcube { position: absolute; top: 12px; right: 13px; width: 100px; height: 100px; }
.cube-face { font: bold 11px Roboto, sans-serif; fill: #8b8e96; }
.axis-z { font: bold 15px "Liberation Sans", sans-serif; fill: #9090fa; }
.axis-x { font: bold 14px "Liberation Sans", sans-serif; fill: #f77; }
.browser, .viewport-foot { position: relative; }
.browser { padding: 5px; }
.strip { display: flex; align-items: center; width: 375px; height: 31px; padding: 0 2px 0 5px; border: 1px solid #c4c4c4; background: #f1f1f1; color: #666; }
.strip span { margin-left: 13px; }
.strip button { margin: 0 8px 0 auto; }
.tree { display: grid; gap: 6px; margin-top: 7px; color: #333; }
.tree li { display: flex; align-items: center; gap: 10px; height: 24px; padding-left: 45px; }
.tree .root { padding-left: 21px; }
.node { display: flex; align-items: center; height: 24px; padding: 0 15px 0 4px; background: #f1f1f1; }
.root .node { padding-right: 9px; }
.node > span { margin-left: 18px; }
.node .second { margin-left: 11px; }
.node .muted { color: #999; }
.node .root-name { display: flex; align-items: center; gap: 17px; width: 163px; height: 20px; margin: 0 5px 0 7px; padding-left: 4px; background: #999; color: #fff; font-weight: bold; }
.viewport-foot { display: grid; grid-template-columns: 1fr auto 1fr; align-items: end; padding: 0 5px 5px; }
.comments { border-top: 0; }
.comments span { margin-left: 25px; }
.navbar { display: flex; align-items: center; gap: 10px; height: 31px; padding: 0 4px; background: #f1f1f1; }
.caret { margin-left: 5px; color: #333; }
.navbar button:nth-child(n+6) { margin-left: -2px; }

/* Timeline */
.timeline { display: flex; align-items: center; height: 55px; flex: none; padding: 6px 13px 0; border-top: 3px solid #d4d4d4; background: #f1f1f1; }
.playback { display: flex; align-items: center; gap: 14px; }
.history { position: relative; display: flex; align-items: center; gap: 10px; height: 44px; margin-left: 28px; }
.bracket { position: absolute; left: 10px; top: 35px; }
.marker { position: absolute; left: 107px; top: 4px; }
.settings { margin-left: auto; color: #888; }
```
